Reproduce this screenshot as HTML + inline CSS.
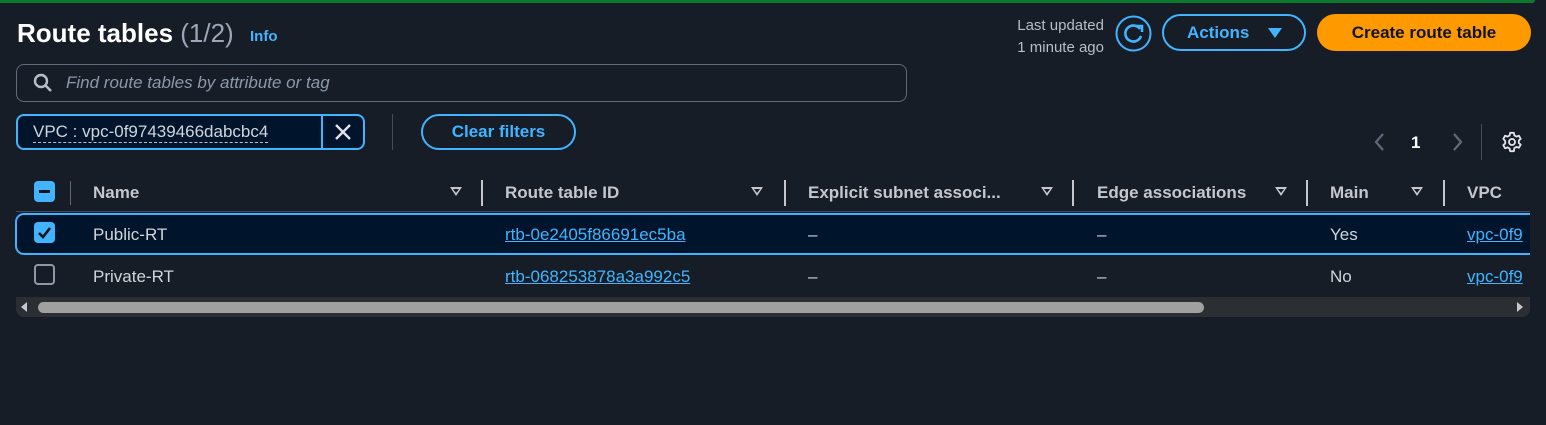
<!DOCTYPE html>
<html><head><style>
*{margin:0;padding:0;box-sizing:border-box}
body{width:1546px;height:425px;background:#161d26;font-family:"Liberation Sans",sans-serif;color:#d1d5db;position:relative;overflow:hidden}
.a{position:absolute;white-space:nowrap}
.h{font-weight:bold;font-size:17px;color:#c6c6cd;top:183px}
.s{top:187px;width:0;height:0;border-left:6px solid transparent;border-right:6px solid transparent;border-top:9px solid #c6c6cd}
.s:after{content:"";position:absolute;left:-3px;top:-7px;border-left:3px solid transparent;border-right:3px solid transparent;border-top:4px solid #161d26}
.d{width:2px;height:26px;background:#c6c6cd;top:180px}
.c{font-size:17px;color:#d1d5db}
.l{color:#42b4ff;text-decoration:underline;font-size:17px}
</style></head><body>
<div class="a" style="left:0;top:0;width:1535px;height:3px;background:#0b7a2c;border-radius:0 0 6px 0"></div>
<div class="a" style="left:17px;top:18px;font-size:26px;font-weight:bold;color:#fff">Route tables <span style="font-weight:normal;color:#9ba7b6">(1/2)</span></div>
<div class="a" style="left:250px;top:28px;font-size:15px;font-weight:bold;color:#42b4ff">Info</div>
<div class="a" style="left:16px;top:64px;width:891px;height:38px;border:1px solid #5f6b7a;border-radius:8px"></div>
<svg class="a" style="left:33px;top:73px" width="20" height="20" viewBox="0 0 20 20"><circle cx="8" cy="8" r="6" fill="none" stroke="#b6bec9" stroke-width="2.4"/><line x1="12.5" y1="12.5" x2="18" y2="18" stroke="#b6bec9" stroke-width="2.6"/></svg>
<div class="a" style="left:66px;top:73px;font-size:17px;font-style:italic;color:#8d99a8">Find route tables by attribute or tag</div>
<div class="a" style="left:16px;top:114px;width:349px;height:36px;border:2px solid #42b4ff;border-radius:8px;background:#00142b"></div>
<div class="a" style="left:321px;top:115px;width:2px;height:34px;background:#42b4ff"></div>
<div class="a" style="left:33px;top:122px;font-size:17px;color:#d1d5db;border-bottom:1px dashed #b6bec9;line-height:20px">VPC : vpc-0f97439466dabcbc4</div>
<svg class="a" style="left:334px;top:123px" width="18" height="18"><path d="M2 2L16 16M16 2L2 16" stroke="#e0e3e8" stroke-width="2.4"/></svg>
<div class="a" style="left:392px;top:114px;width:1px;height:36px;background:#414d5c"></div>
<div class="a" style="left:421px;top:114px;width:155px;height:36px;border:2px solid #42b4ff;border-radius:20px;color:#42b4ff;font-weight:bold;font-size:17px;text-align:center;line-height:32px">Clear filters</div>
<div class="a" style="left:990px;top:15px;width:114px;text-align:right;font-size:15px;line-height:22px;color:#b6bec9">Last updated<br>1 minute ago</div>
<svg class="a" style="left:1115px;top:15px" width="37" height="37" viewBox="0 0 37 37"><circle cx="18.5" cy="18.5" r="17" fill="none" stroke="#42b4ff" stroke-width="2"/><path d="M25 14A8 8 0 1 0 26 21" fill="none" stroke="#42b4ff" stroke-width="2.6"/><path d="M21 11L27 11L27 17" fill="none" stroke="#42b4ff" stroke-width="2.6"/></svg>
<div class="a" style="left:1162px;top:14px;width:144px;height:37px;border:2px solid #42b4ff;border-radius:20px;color:#42b4ff;font-weight:bold;font-size:17px;line-height:33px;padding-left:23px">Actions</div>
<div class="a" style="left:1268px;top:28px;border-left:7px solid transparent;border-right:7px solid transparent;border-top:10px solid #42b4ff"></div>
<div class="a" style="left:1317px;top:14px;width:214px;height:37px;background:#ff9900;border-radius:20px;color:#0f141a;font-weight:bold;font-size:17px;text-align:center;line-height:37px">Create route table</div>
<svg class="a" style="left:1372px;top:132px" width="16" height="20"><path d="M11 2L4 10L11 18" fill="none" stroke="#5f6b7a" stroke-width="2.2"/></svg>
<div class="a" style="left:1411px;top:133px;font-weight:bold;font-size:17px;color:#fff">1</div>
<svg class="a" style="left:1449px;top:132px" width="16" height="20"><path d="M5 2L12 10L5 18" fill="none" stroke="#5f6b7a" stroke-width="2.2"/></svg>
<div class="a" style="left:1481px;top:124px;width:1px;height:36px;background:#414d5c"></div>
<svg class="a" style="left:1501px;top:131px" width="22" height="22" viewBox="0 0 24 24"><path d="M10 2h4l.6 2.8 2.2 1.3 2.7-1 2 3.4-2.1 1.9v2.6l2.1 1.9-2 3.4-2.7-1-2.2 1.3L14 22h-4l-.6-2.8-2.2-1.3-2.7 1-2-3.4 2.1-1.9v-2.6L2.5 8.5l2-3.4 2.7 1 2.2-1.3z" fill="none" stroke="#e0e3e8" stroke-width="2" stroke-linejoin="round"/><circle cx="12" cy="12" r="3.3" fill="none" stroke="#e0e3e8" stroke-width="2"/></svg>
<div class="a" style="left:0;top:0;width:1530px;height:425px;overflow:hidden">
<div class="a" style="left:34px;top:181px;width:21px;height:21px;background:#42b4ff;border-radius:4px"></div>
<div class="a" style="left:39px;top:190px;width:11px;height:3px;background:#0f141a"></div>
<div class="a" style="left:70px;top:181px;width:1px;height:24px;background:#5f6b7a"></div>
<div class="a h" style="left:93px">Name</div><div class="a s" style="left:450px"></div><div class="a d" style="left:481px"></div>
<div class="a h" style="left:505px">Route table ID</div><div class="a s" style="left:751px"></div><div class="a d" style="left:784px"></div>
<div class="a h" style="left:808px">Explicit subnet associ...</div><div class="a s" style="left:1041px"></div><div class="a d" style="left:1072px"></div>
<div class="a h" style="left:1097px">Edge associations</div><div class="a s" style="left:1275px"></div><div class="a d" style="left:1306px"></div>
<div class="a h" style="left:1330px">Main</div><div class="a s" style="left:1411px"></div><div class="a d" style="left:1443px"></div>
<div class="a h" style="left:1467px">VPC</div>
<div class="a" style="left:16px;top:211px;width:1530px;height:1px;background:#414d5c"></div>
<div class="a" style="left:15px;top:213px;width:1540px;height:42px;border:2px solid #42b4ff;border-radius:9px;background:#00142b"></div>
<div class="a" style="left:34px;top:222px;width:21px;height:21px;background:#42b4ff;border-radius:4px"></div>
<svg class="a" style="left:34px;top:222px" width="21" height="21"><path d="M5 11L9 15L16 6" fill="none" stroke="#0f141a" stroke-width="2.6"/></svg>
<div class="a c" style="left:93px;top:225px">Public-RT</div>
<div class="a l" style="left:505px;top:225px">rtb-0e2405f86691ec5ba</div>
<div class="a c" style="left:808px;top:225px">–</div><div class="a c" style="left:1097px;top:225px">–</div>
<div class="a c" style="left:1330px;top:225px">Yes</div><div class="a l" style="left:1467px;top:225px">vpc-0f9</div>
<div class="a" style="left:34px;top:264px;width:21px;height:21px;border:2px solid #8d99a8;border-radius:4px"></div>
<div class="a c" style="left:93px;top:267px">Private-RT</div>
<div class="a l" style="left:505px;top:267px">rtb-068253878a3a992c5</div>
<div class="a c" style="left:808px;top:267px">–</div><div class="a c" style="left:1097px;top:267px">–</div>
<div class="a c" style="left:1330px;top:267px">No</div><div class="a l" style="left:1467px;top:267px">vpc-0f9</div>
<div class="a" style="left:16px;top:297px;width:1514px;height:20px;background:#2b2f33;border-radius:0 0 8px 8px"></div>
<div class="a" style="left:21px;top:302px;border-top:5px solid transparent;border-bottom:5px solid transparent;border-right:6px solid #c8c8c8"></div>
<div class="a" style="left:38px;top:302px;width:1166px;height:11px;background:#a0a0a0;border-radius:6px"></div>
<div class="a" style="left:1517px;top:302px;border-top:5px solid transparent;border-bottom:5px solid transparent;border-left:6px solid #c8c8c8"></div>
</div>
</body></html>
